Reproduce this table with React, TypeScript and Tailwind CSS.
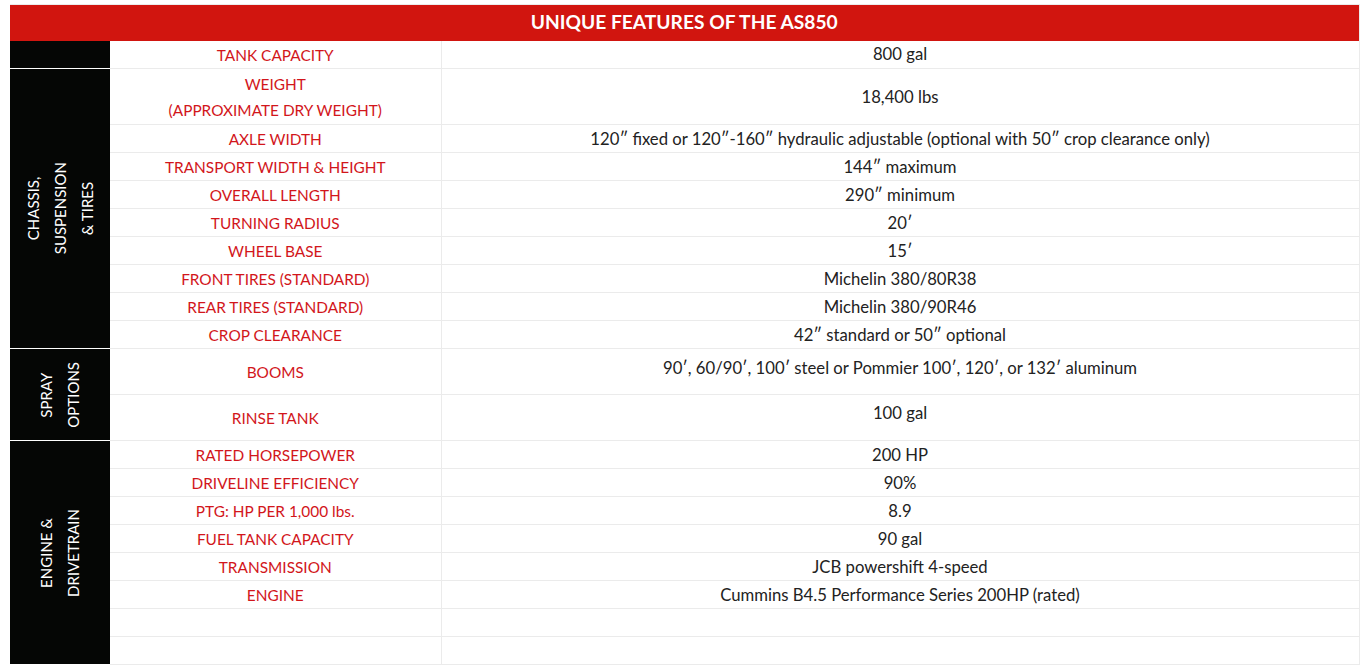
import React from "react";

type Row = { label: React.ReactNode; value: string; h: string; vpad?: string };

const groups: { title: React.ReactNode; rows: Row[] }[] = [
  {
    title: null,
    rows: [{ label: "TANK CAPACITY", value: "800 gal", h: "h-[28px]" }],
  },
  {
    title: (
      <>
        CHASSIS,
        <br />
        SUSPENSION
        <br />
        &amp; TIRES
      </>
    ),
    rows: [
      {
        label: (
          <>
            WEIGHT
            <br />
            (APPROXIMATE DRY WEIGHT)
          </>
        ),
        value: "18,400 lbs",
        h: "h-[56px]",
      },
      { label: "AXLE WIDTH", value: "120\u2033 fixed or 120\u2033-160\u2033 hydraulic adjustable (optional with 50\u2033 crop clearance only)", h: "h-[28px]" },
      { label: "TRANSPORT WIDTH & HEIGHT", value: "144\u2033 maximum", h: "h-[28px]" },
      { label: "OVERALL LENGTH", value: "290\u2033 minimum", h: "h-[28px]" },
      { label: "TURNING RADIUS", value: "20\u2032", h: "h-[28px]" },
      { label: "WHEEL BASE", value: "15\u2032", h: "h-[28px]" },
      { label: "FRONT TIRES (STANDARD)", value: "Michelin 380/80R38", h: "h-[28px]" },
      { label: "REAR TIRES (STANDARD)", value: "Michelin 380/90R46", h: "h-[28px]" },
      { label: "CROP CLEARANCE", value: "42\u2033 standard or 50\u2033 optional", h: "h-[28px]" },
    ],
  },
  {
    title: (
      <>
        SPRAY
        <br />
        OPTIONS
      </>
    ),
    rows: [
      { label: "BOOMS", value: "90\u2032, 60/90\u2032, 100\u2032 steel or Pommier 100\u2032, 120\u2032, or 132\u2032 aluminum", h: "h-[46px]", vpad: "pb-2" },
      { label: "RINSE TANK", value: "100 gal", h: "h-[46px]", vpad: "pb-[10px]" },
    ],
  },
  {
    title: (
      <>
        ENGINE &amp;
        <br />
        DRIVETRAIN
      </>
    ),
    rows: [
      { label: "RATED HORSEPOWER", value: "200 HP", h: "h-[28px]" },
      { label: "DRIVELINE EFFICIENCY", value: "90%", h: "h-[28px]" },
      { label: "PTG: HP PER 1,000 lbs.", value: "8.9", h: "h-[28px]" },
      { label: "FUEL TANK CAPACITY", value: "90 gal", h: "h-[28px]" },
      { label: "TRANSMISSION", value: "JCB powershift 4-speed", h: "h-[28px]" },
      { label: "ENGINE", value: "Cummins B4.5 Performance Series 200HP (rated)", h: "h-[28px]" },
      { label: "", value: "", h: "h-[28px]" },
      { label: "", value: "", h: "h-[28px]" },
    ],
  },
];

export default function App() {
  return (
    <div className="bg-white w-[1366px] h-[670px] pt-[4px] pl-[10px] font-['Lato','Liberation_Sans',sans-serif] text-[16px]">
      <table className="w-[1349px] table-fixed border-collapse border-t border-r border-[#ebebeb]">
        <colgroup>
          <col className="w-[100px]" />
          <col className="w-[331px]" />
          <col className="w-[918px]" />
        </colgroup>
        <thead>
          <tr>
            <th colSpan={3} className="h-[36px] bg-[#d1150f] text-white text-[19.2px] font-bold text-center align-middle">
              UNIQUE FEATURES OF THE AS850
            </th>
          </tr>
        </thead>
        <tbody>
          {groups.map((g, gi) =>
            g.rows.map((r, ri) => (
              <tr key={`${gi}-${ri}`}>
                {ri === 0 && (
                  <td
                    rowSpan={g.rows.length}
                    className="bg-[#050605] border-b border-white text-white text-[15px] align-middle p-0"
                  >
                    <div className="flex justify-center items-center">
                      <div className="[writing-mode:vertical-rl] rotate-180 text-center leading-[27px]">{g.title}</div>
                    </div>
                  </td>
                )}
                <td className={`${r.h} border-b border-r border-[#ebebeb] text-center align-middle text-[#d2161b] text-[15.4px] leading-[26px] p-0`}>
                  <div className="pt-px">{r.label}</div>
                </td>
                <td className={`${r.h} border-b border-[#ebebeb] text-center align-middle text-[#222] text-[16.7px] leading-[24px] p-0`}>
                  <div className={r.vpad ?? ""}>{r.value}</div>
                </td>
              </tr>
            ))
          )}
        </tbody>
      </table>
    </div>
  );
}
